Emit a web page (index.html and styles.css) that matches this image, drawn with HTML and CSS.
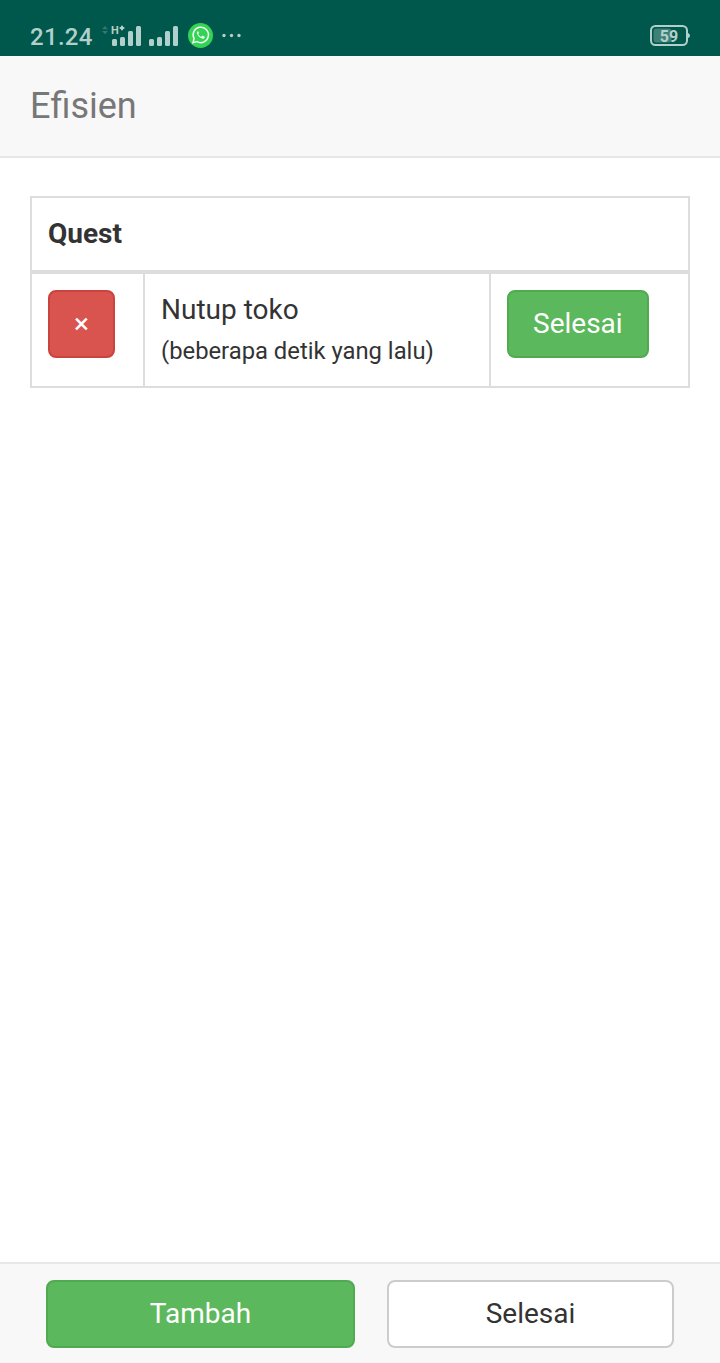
FILE: index.html
```html
<!DOCTYPE html>
<html lang="id">
<head>
<meta charset="utf-8">
<title>Efisien</title>
<link rel="stylesheet" href="styles.css">
</head>
<body>
<div class="status">
  <span class="clock">21.24</span>
  <svg class="status-icons" width="144" height="32" viewBox="100 20 144 32">
    <path class="data" d="M102 29.300 105 26l3 3.300zM102 31 105 34.300l3-3.300z"/>
    <text class="network" x="111" y="34">H</text>
    <path class="plus" d="M119.700 28h4.600M122 25.700v4.600"/>
    <g class="signal">
      <rect x="112" y="39" width="5" height="7" rx="1.5"/>
      <rect x="120" y="37" width="5" height="9" rx="1.5"/>
      <rect x="128" y="31" width="5" height="15" rx="1.5"/>
      <rect x="136" y="26" width="5" height="20" rx="1.5"/>
      <rect x="149" y="39" width="5" height="7" rx="1.5"/>
      <rect x="157" y="37" width="5" height="9" rx="1.5"/>
      <rect x="165" y="31" width="5" height="15" rx="1.5"/>
      <rect x="173" y="26" width="5" height="20" rx="1.5"/>
      <circle cx="224" cy="35.5" r="1.7"/>
      <circle cx="231.5" cy="35.5" r="1.7"/>
      <circle cx="239" cy="35.5" r="1.7"/>
    </g>
    <circle class="chat" cx="200.5" cy="35.500" r="12.500"/>
    <path class="bubble" d="m193 42.700 1.100-4a7.700 7.700 0 1 1 2.900 2.900z"/>
    <path class="phone" d="M197.900 31.300c-1 .5-1.200 1.500-.8 2.500.8 2.300 2.600 4 5 4.800 1.200.4 2.300-.1 2.600-1.200.1-.5.100-.7-.3-.9l-1.600-.7c-.4-.2-.6 0-.8.3l-.6.700c-1.500-.6-2.500-1.500-3.200-2.900l.5-.6c.3-.4.3-.5.1-.9l-.5-1c-.1-.2-.2-.2-.4-.1z"/>
  </svg>
  <svg class="battery" width="42" height="24" viewBox="649 24 42 24">
    <rect class="charge" x="653.5" y="28.5" width="18" height="14" rx="3"/>
    <rect class="shell" x="651" y="26" width="36" height="19" rx="4.5"/>
    <path class="tip" d="M688 33q2 .5 2 2.500t-2 2.500z"/>
    <text class="percent" x="669" y="42" text-anchor="middle">59</text>
  </svg>
</div>
<header class="navbar">Efisien</header>
<main class="content">
  <table class="quests">
    <colgroup><col class="col-remove"><col class="col-name"><col class="col-done"></colgroup>
    <thead><tr><th colspan="3">Quest</th></tr></thead>
    <tbody>
      <tr>
        <td><button class="btn danger">×</button></td>
        <td>Nutup toko<br><small>(beberapa detik yang lalu)</small></td>
        <td><button class="btn success">Selesai</button></td>
      </tr>
    </tbody>
  </table>
</main>
<footer class="actions">
  <button class="btn success add">Tambah</button>
  <button class="btn plain finish">Selesai</button>
</footer>
</body>
</html>
```
FILE: styles.css
```css
* { box-sizing: border-box; }
body {
  margin: 0;
  height: 1363px;
  display: flex;
  flex-direction: column;
  background: #fff;
  color: #333;
  font: 28px/40px Roboto, sans-serif;
}
.status {
  height: 56px;
  padding: 0 29px 0 30px;
  display: flex;
  align-items: flex-start;
  background: #00574b;
  color: #b2d0cb;
}
.clock {
  width: 70px;
  padding-top: 17px;
  font-size: 24px;
  font-weight: 500;
  letter-spacing: 0.3px;
}
.status-icons { margin-top: 20px; }
.data { fill: #34786e; }
.network { font: bold 11px Roboto, sans-serif; fill: #b2d0cb; }
.plus { stroke: #b2d0cb; stroke-width: 2; }
.signal, .tip { fill: #b2d0cb; }
.chat { fill: #35d355; }
.bubble { fill: none; stroke: #effff0; stroke-width: 1.5; }
.phone { fill: #effff0; }
.battery { margin: 24px 0 0 auto; }
.charge { fill: #3f8077; }
.shell { fill: none; stroke: #b2d0cb; stroke-width: 2; }
.percent { font: bold 16px Roboto, sans-serif; fill: #b2d0cb; }
.navbar {
  height: 102px;
  padding: 30px 30px 0;
  background: #f8f8f8;
  border-bottom: 2px solid #e7e7e7;
  color: #777;
  font-size: 36px;
}
.content { flex: 1; padding: 38px 30px 0; }
.quests {
  width: 660px;
  table-layout: fixed;
  border-collapse: separate;
  border-spacing: 0;
  border: 2px solid #ddd;
}
.col-remove { width: 113px; }
.col-name { width: 346px; }
.quests th {
  height: 76px;
  padding: 16px;
  text-align: left;
  vertical-align: top;
  border-bottom: 4px solid #ddd;
}
.quests td {
  height: 112px;
  padding: 16px;
  vertical-align: top;
  border-right: 2px solid #ddd;
}
.quests td:last-child { border-right: 0; }
.quests small { font-size: 23.8px; line-height: 1; }
.btn {
  display: block;
  height: 68px;
  padding: 12px 24px;
  border: 2px solid;
  border-radius: 8px;
  font: 28px/40px Roboto, sans-serif;
  text-align: center;
}
.danger { background: #d9534f; border-color: #cb433f; color: #fff; }
.success { background: #5cb85c; border-color: #50aa50; color: #fff; }
.plain { background: #fff; border-color: #ccc; color: #333; }
.actions {
  height: 101px;
  display: flex;
  gap: 32px;
  padding: 16px 46px 0;
  background: #f8f8f8;
  border-top: 2px solid #e7e7e7;
}
.add { width: 309px; }
.finish { width: 287px; }
```
